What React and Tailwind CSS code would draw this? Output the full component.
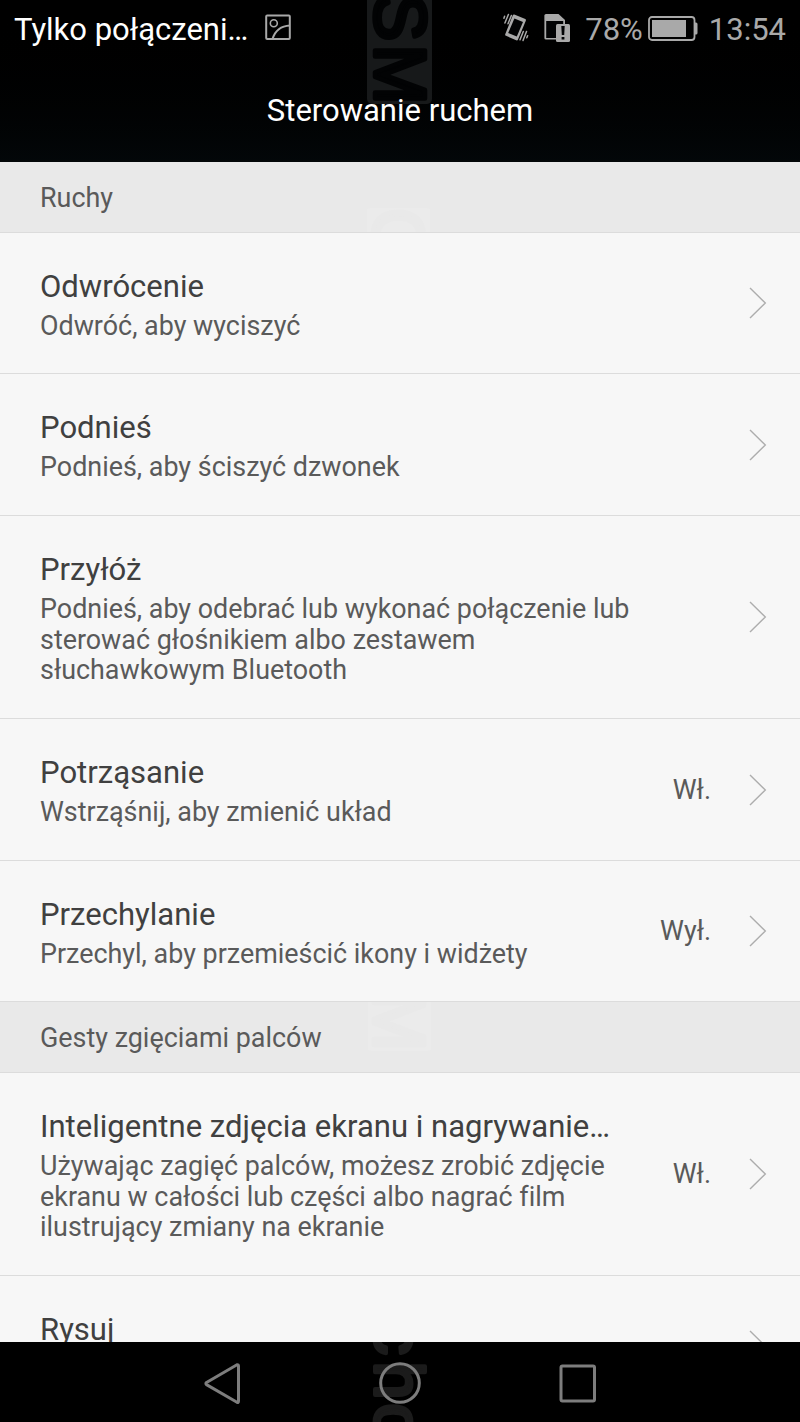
import React from "react";

const motions = [
  { title: "Odwrócenie", lines: ["Odwróć, aby wyciszyć"], size: "h-[141px]" },
  {
    title: "Podnieś",
    lines: ["Podnieś, aby ściszyć dzwonek"],
    size: "h-[142px]",
  },
  {
    title: "Przyłóż",
    lines: [
      "Podnieś, aby odebrać lub wykonać połączenie lub",
      "sterować głośnikiem albo zestawem",
      "słuchawkowym Bluetooth",
    ],
    size: "h-[203px]",
  },
  {
    title: "Potrząsanie",
    lines: ["Wstrząśnij, aby zmienić układ"],
    value: "Wł.",
    size: "h-[142px]",
  },
  {
    title: "Przechylanie",
    lines: ["Przechyl, aby przemieścić ikony i widżety"],
    value: "Wył.",
    size: "h-[141px]",
  },
];

const gestures = [
  {
    title: "Inteligentne zdjęcia ekranu i nagrywanie…",
    lines: [
      "Używając zagięć palców, możesz zrobić zdjęcie",
      "ekranu w całości lub części albo nagrać film",
      "ilustrujący zmiany na ekranie",
    ],
    value: "Wł.",
    size: "h-[203px]",
  },
  { title: "Rysuj", lines: ["Narysuj literę"], size: "h-[141px]" },
];

const Chevron = () => (
  <svg
    className="ml-[38px] h-8 w-[18px] shrink-0"
    viewBox="0 0 18 32"
    fill="none"
    stroke="#adadad"
    strokeWidth="1.4"
  >
    <path d="M1 1 L16.3 16 L1 31" />
  </svg>
);

const Row = ({ title, lines, value, size }) => (
  <div
    className={`${size} flex shrink-0 items-center border-b border-[#dcdcdc] pr-[33px] pl-10`}
  >
    <div className="flex-1 pt-[3px] whitespace-nowrap">
      <div className="text-[31.05px] leading-[37px] text-[#404040]">
        {title}
      </div>
      <div className="mt-1.5 text-[26.9px] leading-[30.7px] text-[#5a5a5a] [font-variant-ligatures:none]">
        {lines.map((line) => (
          <div key={line}>{line}</div>
        ))}
      </div>
    </div>
    {value && (
      <span className="pt-px text-[26.9px] text-[#5a5a5a]">{value}</span>
    )}
    <Chevron />
  </div>
);

const Section = ({ children, mark }) => (
  <div className="relative flex h-[71px] shrink-0 items-center overflow-hidden border-b border-[#dcdcdc] bg-[#e9e9e9] pt-[3px] pl-10 text-[26.9px] text-[#5a5a5a]">
    {mark}
    <span className="relative">{children}</span>
  </div>
);

const StatusBar = () => (
  <div className="relative flex h-[60px] items-center pr-3.5 pl-3.5 text-[31px] text-[#a9a9a9]">
    <span className="text-white">Tylko połączeni…</span>
    <svg
      className="-mt-1.5 ml-[17px] h-[27px] w-[27px]"
      viewBox="0 0 27 27"
      fill="none"
      stroke="#a9a9a9"
      strokeWidth="2"
    >
      <rect x="1.2" y="1.4" width="23.6" height="23.6" rx="1" />
      <circle cx="8.8" cy="9.2" r="3.5" strokeWidth="1.6" />
      <path d="M7.5 25 C10 17 15 12 25 11.5" />
    </svg>
    <div className="ml-auto flex items-center">
      <svg
        className="-mt-1 h-[30px] w-[26px]"
        viewBox="0 0 26 30"
        fill="none"
        stroke="#a9a9a9"
        strokeWidth="1.5"
        strokeLinecap="round"
      >
        <path
          d="M11.3 1.5 L22.3 6 Q23.3 6.6 22.8 7.7 L15 26.5 Q14.5 27.8 13.2 27.3 L3 22.8 Q1.8 22.2 2.3 21 L9.7 2.5 Q10.2 1.1 11.3 1.5Z"
          fill="#a9a9a9"
          stroke="none"
        />
        <path
          d="M11.4 5.5 L20 9 L13.8 23.5 L5.2 20Z"
          fill="#020304"
          stroke="none"
        />
        <path d="M1.6 3.2 L.9 5.2 M5.4 1.5 L1.9 10 M8.4 2.5 L5 10.8 M24.6 22.8 L23.8 24.8 M23.5 18.5 L20 27.5 M20.3 18.5 L17 26.8" />
      </svg>
      <svg className="-mt-1 ml-[15px] h-[30px] w-[26px]" viewBox="0 0 26 30">
        <path
          d="M2 1 H14.5 L21 7 V26.5 H2 Q.4 26.5 .4 25 V2.5 Q.4 1 2 1Z"
          fill="#a9a9a9"
        />
        <path d="M2.2 8 H19.2 V25 H2.2Z" fill="#020304" />
        <rect x="12" y="11" width="14" height="18" rx="1.5" fill="#a9a9a9" />
        <path
          d="M17.3 13 H20.7 L20.2 22 H17.8Z M17.6 24 H20.4 V26.6 H17.6Z"
          fill="#020304"
        />
      </svg>
      <span className="ml-[15px]">78%</span>
      <svg className="-mt-1 ml-[5px] h-[25px] w-[50px]" viewBox="0 0 50 25">
        <rect
          x="1"
          y="1"
          width="45.5"
          height="23"
          rx="3"
          fill="none"
          stroke="#a9a9a9"
          strokeWidth="1.8"
        />
        <rect x="4" y="4" width="34" height="17" fill="#a9a9a9" />
        <path
          d="M47 6.5 H48 Q49.5 6.5 49.5 8 V17 Q49.5 18.5 48 18.5 H47Z"
          fill="#a9a9a9"
        />
      </svg>
      <span className="ml-[11px]">13:54</span>
    </div>
  </div>
);

const App = () => (
  <div className="flex h-[1422px] w-[800px] flex-col overflow-hidden bg-[#f7f7f7] font-['Roboto',sans-serif]">
    <header className="relative h-[162px] shrink-0 overflow-hidden bg-linear-to-b from-black to-[#030709]">
      <svg
        className="absolute top-0 left-[367px] h-[104px] w-[65px]"
        viewBox="0 0 65 104"
      >
        <rect y="-6" width="65" height="110" rx="5" fill="#17191a" />
        <text
          transform="translate(7.5 0) rotate(90)"
          x="-7 44.5"
          className="font-['Liberation_Sans',sans-serif] text-[72px]"
          fill="#020304"
          stroke="#020304"
          strokeWidth="4.5"
          strokeLinejoin="round"
        >
          SM
        </text>
      </svg>
      <StatusBar />
      <h1 className="relative mt-8 text-center text-[31px] leading-[37px] text-white">
        Sterowanie ruchem
      </h1>
    </header>

    <main className="flex min-h-0 flex-1 flex-col overflow-hidden">
      <Section
        mark={
          <svg
            className="absolute top-[46px] left-[367px] h-6 w-[63px]"
            viewBox="0 0 63 24"
          >
            <rect width="63" height="30" rx="3" fill="#ebebeb" />
            <text
              transform="translate(6 0) rotate(90)"
              className="font-['Liberation_Sans',sans-serif] text-[72px]"
              fill="#e9e9e9"
              stroke="#e9e9e9"
              strokeWidth="4.5"
              strokeLinejoin="round"
            >
              G
            </text>
          </svg>
        }
      >
        Ruchy
      </Section>
      {motions.map((item) => (
        <Row key={item.title} {...item} />
      ))}
      <Section
        mark={
          <svg
            className="absolute top-0 left-[368px] h-[50px] w-[63px]"
            viewBox="0 0 63 50"
          >
            <rect y="-6" width="63" height="55" rx="3" fill="#ebebeb" />
            <text
              transform="translate(6 -11) rotate(90)"
              className="font-['Liberation_Sans',sans-serif] text-[72px]"
              fill="#e9e9e9"
              stroke="#e9e9e9"
              strokeWidth="4.5"
              strokeLinejoin="round"
            >
              M
            </text>
          </svg>
        }
      >
        Gesty zgięciami palców
      </Section>
      {gestures.map((item) => (
        <Row key={item.title} {...item} />
      ))}
    </main>

    <nav className="flex h-20 shrink-0 bg-black">
      <svg
        className="h-20 w-[800px]"
        viewBox="0 0 800 80"
        fill="none"
        stroke="#7d7d7d"
        strokeWidth="3"
        strokeLinejoin="round"
      >
        <text
          transform="translate(374.5 0) rotate(90)"
          x="-21 19.5 61.5"
          className="font-['Liberation_Sans',sans-serif] text-[68px]"
          fill="#1b1b1b"
          stroke="#1b1b1b"
          strokeWidth="4"
        >
          cho
        </text>
        <path d="M206.5 40.5 L237 22.8 Q238.5 22.5 238.5 24 V59 Q238.5 61 237 60.3 L206.5 42.6 Q205.3 41.5 206.5 40.5Z" />
        <circle cx="400" cy="41" r="19.3" />
        <rect x="561" y="24" width="33.5" height="35" rx="1.5" />
      </svg>
    </nav>
  </div>
);

export default App;
